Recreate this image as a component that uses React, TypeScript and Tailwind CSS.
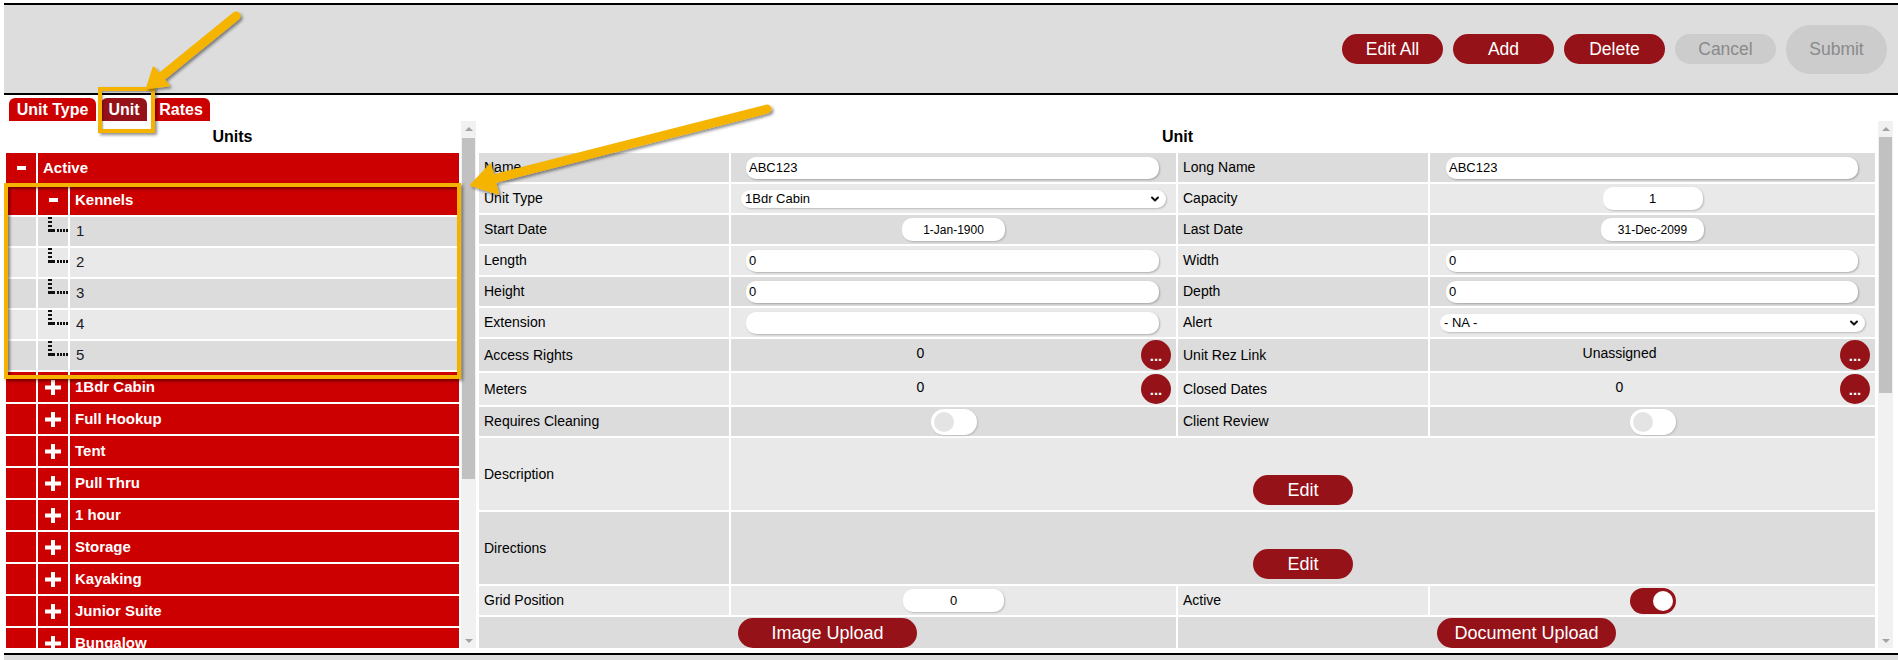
import React from "react";
import { ChevronDown } from "lucide-react";

const DARK = "bg-[#dcdcdc]";
const LIGHT = "bg-[#e9e9e9]";
const MAROON = "bg-[#961219]";

function PlusIcon() {
  return (
    <svg width="16" height="15" viewBox="0 0 16 15">
      <rect x="6" y="0" width="4" height="15" fill="#fff" />
      <rect x="0" y="5.5" width="16" height="4" fill="#fff" />
    </svg>
  );
}

function MinusIcon() {
  return <div className="w-[9px] h-[4px] bg-white" />;
}

function TreeJoin() {
  return (
    <svg width="21" height="16" viewBox="0 0 21 16">
      {[0, 4, 8].map((y) => (
        <rect key={y} x="0" y={y} width="4" height="2" fill="#111" />
      ))}
      <rect x="0" y="12" width="7" height="3" fill="#111" />
      {[9, 12, 15, 18].map((x) => (
        <rect key={x} x={x} y="12" width="2" height="3" fill="#111" />
      ))}
    </svg>
  );
}

function ScrollBar({ thumbClass }: { thumbClass: string }) {
  return (
    <div className="w-[15px] h-full bg-[#f1f1f1] flex flex-col">
      <div className="h-[15px] flex items-center justify-center">
        <div className="w-0 h-0 border-x-[4px] border-x-transparent border-b-[4px] border-b-[#a3a3a3]" />
      </div>
      <div className={`mx-[1px] bg-[#c1c1c1] ${thumbClass}`} />
      <div className="flex-1" />
      <div className="h-[15px] flex items-center justify-center">
        <div className="w-0 h-0 border-x-[4px] border-x-transparent border-t-[4px] border-t-[#a3a3a3]" />
      </div>
    </div>
  );
}

function TextInput({ value, className = "ml-[15px] mr-[17px]" }: { value: string; className?: string }) {
  return (
    <div
      className={`${className} flex-1 h-[22px] rounded-[10px] bg-white shadow-[1px_1px_2px_rgba(0,0,0,0.25)] pl-[3px] text-[13px] flex items-center text-black`}
    >
      {value}
    </div>
  );
}

function SelectBox({ value }: { value: string }) {
  return (
    <div className="mx-[10px] flex-1 h-[18px] rounded-[9px] bg-white shadow-[1px_1px_2px_rgba(0,0,0,0.2)] pl-[4px] pr-[5px] text-[13px] flex items-center justify-between text-black">
      <span>{value}</span>
      <ChevronDown size={12} strokeWidth={4} color="#111" />
    </div>
  );
}

function SmallBox({ value, w = "w-[103px]", text = "text-[12px]" }: { value: string; w?: string; text?: string }) {
  return (
    <div
      className={`${w} h-[23px] rounded-[10px] bg-white shadow-[1px_1px_2px_rgba(0,0,0,0.2)] ${text} flex items-center justify-center text-black`}
    >
      {value}
    </div>
  );
}

function DotsButton() {
  return (
    <div className={`w-[30px] h-[30px] rounded-full ${MAROON} flex justify-center text-white font-bold text-[15px] leading-none pt-[8px]`}>
      ...
    </div>
  );
}

function Toggle({ on }: { on: boolean }) {
  return on ? (
    <div className={`w-[46px] h-[26px] rounded-full ${MAROON} flex items-center justify-end pr-[3px]`}>
      <div className="w-[20px] h-[20px] rounded-full bg-white" />
    </div>
  ) : (
    <div className="w-[46px] h-[26px] rounded-full bg-white shadow-[1px_1px_2px_rgba(0,0,0,0.15)] flex items-center pl-[3px]">
      <div className="w-[20px] h-[20px] rounded-full bg-[#e4e4e4]" />
    </div>
  );
}

function Label({ text, bg, h }: { text: string; bg: string; h: string }) {
  return <div className={`${h} ${bg} flex items-center pl-[5px] text-[14px] text-black`}>{text}</div>;
}

function Cell({ bg, h, children, className = "" }: { bg: string; h: string; children?: React.ReactNode; className?: string }) {
  return <div className={`${h} ${bg} flex items-center ${className}`}>{children}</div>;
}

function CountCell({ bg, h, value }: { bg: string; h: string; value: string }) {
  return (
    <div className={`${h} ${bg} flex items-center pr-[5px]`}>
      <div className="flex-1 text-center mr-[31px] pb-[4px] text-[14px] text-black">{value}</div>
      <DotsButton />
    </div>
  );
}

const groups = ["1Bdr Cabin", "Full Hookup", "Tent", "Pull Thru", "1 hour", "Storage", "Kayaking", "Junior Suite", "Bungalow"];

export default function App() {
  const hdrBtn = "w-[101px] h-[30px] rounded-full flex items-center justify-center text-[17.5px]";
  const H = "h-[29px]";
  const H2 = "h-[32px]";
  return (
    <div className="relative w-[1898px] h-[660px] overflow-hidden bg-white font-['Liberation_Sans',Arial,sans-serif] text-[#111]">
      {/* Header */}
      <div className="mt-[3px] ml-[4px] h-[92px] border-y-2 border-black bg-[#dddddd] flex items-center justify-end gap-[10px] pr-[11px]">
        <div className={`${hdrBtn} ${MAROON} text-white`}>Edit All</div>
        <div className={`${hdrBtn} ${MAROON} text-white`}>Add</div>
        <div className={`${hdrBtn} ${MAROON} text-white`}>Delete</div>
        <div className={`${hdrBtn} bg-[#cccccc] text-[#8a8a8a]`}>Cancel</div>
        <div className="w-[101px] h-[49px] rounded-full flex items-center justify-center text-[17.5px] bg-[#cccccc] text-[#8a8a8a]">
          Submit
        </div>
      </div>

      {/* Tabs */}
      <div className="mt-[3px] h-[23px] pl-[9px] flex gap-[5px]">
        <div className="w-[87px] h-full rounded-t-[6px] bg-[#cc0000] text-white font-bold text-[16px] flex items-center justify-center">
          Unit Type
        </div>
        <div className={`w-[46px] h-full rounded-t-[6px] ${MAROON} text-white font-bold text-[16px] flex items-center justify-center`}>
          Unit
        </div>
        <div className="w-[58px] h-full rounded-t-[6px] bg-[#cc0000] text-white font-bold text-[16px] flex items-center justify-center">
          Rates
        </div>
      </div>

      {/* Panels */}
      <div className="h-[527px] flex">
        {/* Left panel */}
        <div className="ml-[4px] w-[457px] h-full overflow-hidden">
          <div className="h-[30px] flex items-center justify-center font-bold text-[16px] text-black pt-[2px]">Units</div>
          <div className="grid grid-cols-[30px_30px_1fr] gap-[2px] p-[2px]">
            <div className="h-[30px] bg-[#cc0000] flex items-center justify-center">
              <MinusIcon />
            </div>
            <div className="col-span-2 h-[30px] bg-[#cc0000] flex items-center pl-[5px] text-white font-bold text-[15px]">
              Active
            </div>

            <div className="h-[30px] bg-[#cc0000]" />
            <div className="h-[30px] bg-[#cc0000] flex items-center justify-center">
              <MinusIcon />
            </div>
            <div className="h-[30px] bg-[#cc0000] flex items-center pl-[5px] text-white font-bold text-[15px]">Kennels</div>

            {["1", "2", "3", "4", "5"].map((n, i) => {
              const bg = i % 2 === 0 ? DARK : LIGHT;
              return (
                <React.Fragment key={n}>
                  <div className={`h-[29px] ${bg}`} />
                  <div className={`h-[29px] ${bg} pl-[10px]`}>
                    <TreeJoin />
                  </div>
                  <div className={`h-[29px] ${bg} flex items-center pl-[6px] text-[15px] text-[#1b1b2a]`}>{n}</div>
                </React.Fragment>
              );
            })}

            {groups.map((g) => (
              <React.Fragment key={g}>
                <div className="h-[30px] bg-[#cc0000]" />
                <div className="h-[30px] bg-[#cc0000] flex items-center justify-center">
                  <PlusIcon />
                </div>
                <div className="h-[30px] bg-[#cc0000] flex items-center pl-[5px] text-white font-bold text-[15px]">{g}</div>
              </React.Fragment>
            ))}
          </div>
        </div>
        <ScrollBar thumbClass="mt-[2px] h-[341px]" />

        {/* Right panel */}
        <div className="ml-[1px] w-[1401px] h-full overflow-hidden">
          <div className="h-[30px] flex items-center justify-center font-bold text-[16px] text-black pt-[2px]">Unit</div>
          <div className="w-[1400px] grid grid-cols-[250px_445px_250px_445px] gap-[2px] p-[2px]">
            {/* Row 1 */}
            <Label text="Name" bg={DARK} h={H} />
            <Cell bg={DARK} h={H}>
              <TextInput value="ABC123" />
            </Cell>
            <Label text="Long Name" bg={DARK} h={H} />
            <Cell bg={DARK} h={H}>
              <TextInput value="ABC123" className="ml-[16px] mr-[17px]" />
            </Cell>

            {/* Row 2 */}
            <Label text="Unit Type" bg={LIGHT} h={H} />
            <Cell bg={LIGHT} h={H}>
              <SelectBox value="1Bdr Cabin" />
            </Cell>
            <Label text="Capacity" bg={LIGHT} h={H} />
            <Cell bg={LIGHT} h={H} className="justify-center">
              <SmallBox value="1" w="w-[100px]" text="text-[13px]" />
            </Cell>

            {/* Row 3 */}
            <Label text="Start Date" bg={DARK} h={H} />
            <Cell bg={DARK} h={H} className="justify-center">
              <SmallBox value="1-Jan-1900" />
            </Cell>
            <Label text="Last Date" bg={DARK} h={H} />
            <Cell bg={DARK} h={H} className="justify-center">
              <SmallBox value="31-Dec-2099" />
            </Cell>

            {/* Row 4 */}
            <Label text="Length" bg={LIGHT} h={H} />
            <Cell bg={LIGHT} h={H}>
              <TextInput value="0" />
            </Cell>
            <Label text="Width" bg={LIGHT} h={H} />
            <Cell bg={LIGHT} h={H}>
              <TextInput value="0" className="ml-[16px] mr-[17px]" />
            </Cell>

            {/* Row 5 */}
            <Label text="Height" bg={DARK} h={H} />
            <Cell bg={DARK} h={H}>
              <TextInput value="0" />
            </Cell>
            <Label text="Depth" bg={DARK} h={H} />
            <Cell bg={DARK} h={H}>
              <TextInput value="0" className="ml-[16px] mr-[17px]" />
            </Cell>

            {/* Row 6 */}
            <Label text="Extension" bg={LIGHT} h={H} />
            <Cell bg={LIGHT} h={H}>
              <TextInput value="" />
            </Cell>
            <Label text="Alert" bg={LIGHT} h={H} />
            <Cell bg={LIGHT} h={H}>
              <SelectBox value="- NA -" />
            </Cell>

            {/* Row 7 */}
            <Label text="Access Rights" bg={DARK} h={H2} />
            <CountCell bg={DARK} h={H2} value="0" />
            <Label text="Unit Rez Link" bg={DARK} h={H2} />
            <CountCell bg={DARK} h={H2} value="Unassigned" />

            {/* Row 8 */}
            <Label text="Meters" bg={LIGHT} h={H2} />
            <CountCell bg={LIGHT} h={H2} value="0" />
            <Label text="Closed Dates" bg={LIGHT} h={H2} />
            <CountCell bg={LIGHT} h={H2} value="0" />

            {/* Row 9 */}
            <Label text="Requires Cleaning" bg={DARK} h={H} />
            <Cell bg={DARK} h={H} className="justify-center">
              <Toggle on={false} />
            </Cell>
            <Label text="Client Review" bg={DARK} h={H} />
            <Cell bg={DARK} h={H} className="justify-center">
              <Toggle on={false} />
            </Cell>

            {/* Row 10 */}
            <Label text="Description" bg={LIGHT} h="h-[72px]" />
            <div className={`col-span-3 h-[72px] ${LIGHT} flex items-end justify-center pb-[5px]`}>
              <div className={`w-[100px] h-[30px] rounded-full ${MAROON} text-white text-[18px] flex items-center justify-center`}>Edit</div>
            </div>

            {/* Row 11 */}
            <Label text="Directions" bg={DARK} h="h-[72px]" />
            <div className={`col-span-3 h-[72px] ${DARK} flex items-end justify-center pb-[5px]`}>
              <div className={`w-[100px] h-[30px] rounded-full ${MAROON} text-white text-[18px] flex items-center justify-center`}>Edit</div>
            </div>

            {/* Row 12 */}
            <Label text="Grid Position" bg={LIGHT} h={H} />
            <Cell bg={LIGHT} h={H} className="justify-center">
              <SmallBox value="0" w="w-[101px]" text="text-[13px]" />
            </Cell>
            <Label text="Active" bg={LIGHT} h={H} />
            <Cell bg={LIGHT} h={H} className="justify-center">
              <Toggle on={true} />
            </Cell>

            {/* Row 13 */}
            <div className={`col-span-2 h-[34px] ${DARK} flex items-start justify-center pt-[1px]`}>
              <div className={`w-[179px] h-[30px] rounded-full ${MAROON} text-white text-[18px] flex items-center justify-center`}>
                Image Upload
              </div>
            </div>
            <div className={`col-span-2 h-[34px] ${DARK} flex items-start justify-center pt-[1px]`}>
              <div className={`w-[179px] h-[30px] rounded-full ${MAROON} text-white text-[18px] flex items-center justify-center`}>
                Document Upload
              </div>
            </div>
          </div>
        </div>
        <ScrollBar thumbClass="mt-[1px] h-[256px]" />
      </div>

      {/* Footer */}
      <div className="mt-[5px] ml-[4px] h-[7px] border-t-2 border-black bg-[#dddddd]" />

      {/* Annotation highlight boxes */}
      <div className="absolute left-[98px] top-[87px] w-[57px] h-[46px] border-[4px] border-[#f5b300] shadow-[2px_2px_3px_rgba(0,0,0,0.45),inset_1px_1px_2px_rgba(0,0,0,0.35)] pointer-events-none" />
      <div className="absolute left-[4px] top-[183px] w-[457px] h-[196px] border-[4px] border-[#f5b300] shadow-[2px_2px_3px_rgba(0,0,0,0.45),inset_2px_2px_3px_rgba(0,0,0,0.45)] pointer-events-none" />

      {/* Annotation arrows */}
      <svg className="absolute left-0 top-0 pointer-events-none" width="1898" height="660" viewBox="0 0 1898 660">
        <defs>
          <filter id="sh" x="-20%" y="-20%" width="140%" height="140%">
            <feDropShadow dx="2" dy="2" stdDeviation="1.5" floodColor="#000" floodOpacity="0.45" />
          </filter>
        </defs>
        <g filter="url(#sh)" fill="#f5b400" stroke="#f5b400">
          <line x1="236" y1="16" x2="161" y2="77" strokeWidth="9" strokeLinecap="round" />
          <polygon points="147,88 168.5,85.5 153.5,67.5" strokeWidth="2" strokeLinejoin="round" />
          <line x1="767" y1="109" x2="493" y2="179" strokeWidth="9" strokeLinecap="round" />
          <polygon points="471,185 497.9,193.5 490.5,164.5" strokeWidth="2" strokeLinejoin="round" />
        </g>
      </svg>
    </div>
  );
}
